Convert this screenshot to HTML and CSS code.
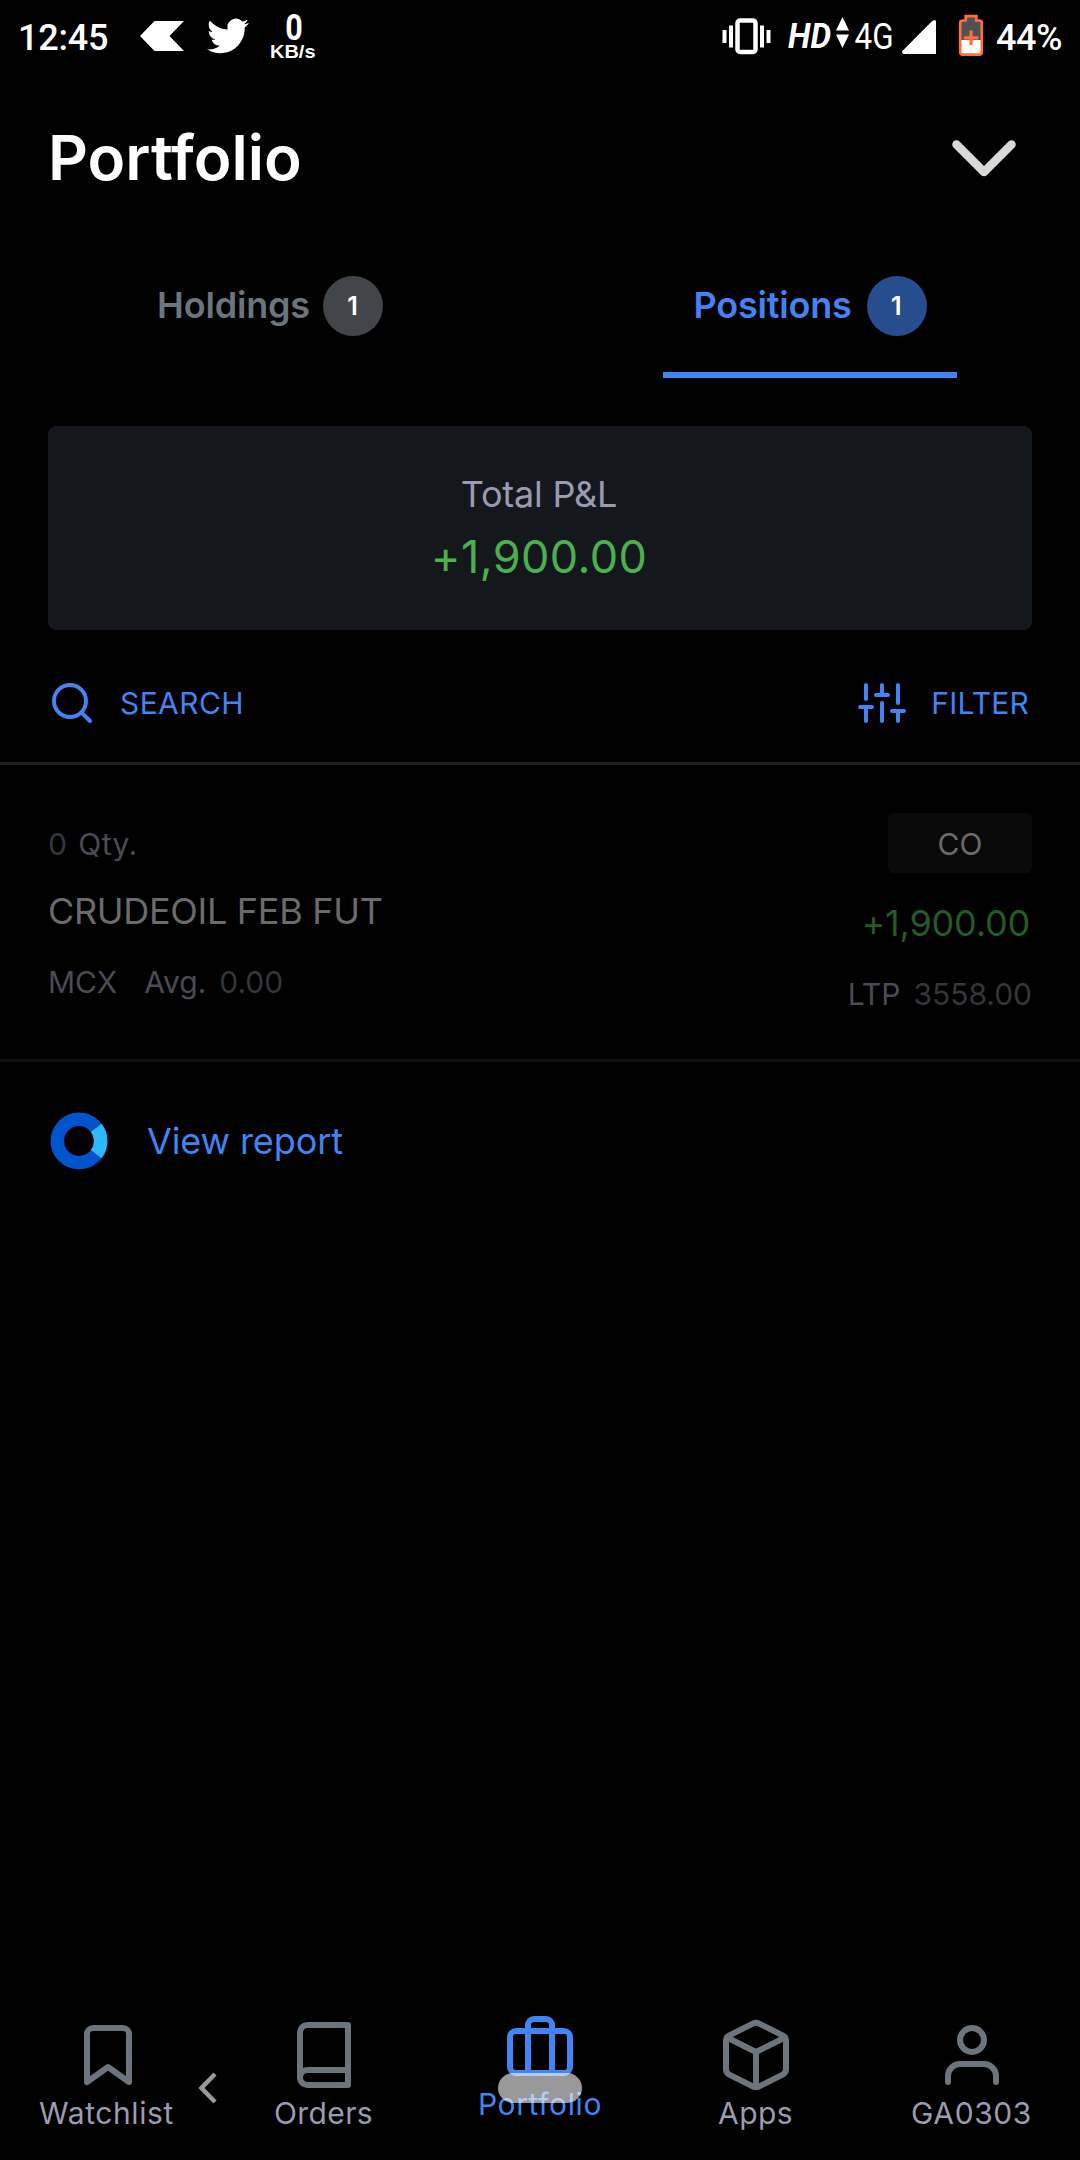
FILE: index.html
```html
<!DOCTYPE html>
<html lang="en">
<head>
<meta charset="utf-8">
<title>Portfolio</title>
<link rel="stylesheet" href="styles.css">
</head>
<body>
<div class="screen">
  <div class="status">
    <span class="clock">12:45</span>
    <svg class="st-flag" width="44" height="30" viewBox="0 0 44 30"><path d="M14.500 0H44L29.500 15 44 30H14.500L0 15z" fill="#fff"/></svg>
    <svg class="st-bird" width="42" height="36" viewBox="0 1.800 24 20.400" preserveAspectRatio="none"><path fill="#fff" d="M23.953 4.570a10 10 0 01-2.825.775 4.958 4.958 0 002.163-2.723c-.951.555-2.005.959-3.127 1.184a4.920 4.920 0 00-8.384 4.482C7.690 8.095 4.067 6.130 1.640 3.162a4.822 4.822 0 00-.666 2.475c0 1.710.870 3.213 2.188 4.096a4.904 4.904 0 01-2.228-.616v.060a4.923 4.923 0 003.946 4.827 4.996 4.996 0 01-2.212.085 4.936 4.936 0 004.604 3.417 9.867 9.867 0 01-6.102 2.105c-.390 0-.779-.023-1.170-.067a13.995 13.995 0 007.557 2.209c9.053 0 13.998-7.496 13.998-13.985 0-.210 0-.420-.015-.630A9.935 9.935 0 0024 4.590z"/></svg>
    <svg class="st-speed" width="46" height="48" viewBox="0 0 46 48"><text class="speed-num" x="24" y="27.500" text-anchor="middle" textLength="17.500" lengthAdjust="spacingAndGlyphs">0</text><text class="speed-unit" x="0" y="46" textLength="45.500" lengthAdjust="spacingAndGlyphs">KB/s</text></svg>
    <svg class="st-vibrate" width="49" height="37" viewBox="0 0 49 37" fill="none" stroke="#fff"><rect x="15.500" y="2.500" width="18" height="31.500" rx="2.500" stroke-width="4.500"/><path d="M2.500 12v13M46.500 12v13" stroke-width="4"/><path d="M9 7.500v22M40 7.500v22" stroke-width="4"/></svg>
    <svg class="st-net" width="106" height="36" viewBox="0 0 106 36"><text class="net-hd" x="0" y="30.500" textLength="43" lengthAdjust="spacingAndGlyphs">HD</text><path d="M54.500 0l6.500 13.500h-13zM54.500 31l6.500-13.500h-13z" fill="#fff"/><text class="net-4g" x="66.500" y="31.500" textLength="39" lengthAdjust="spacingAndGlyphs">4G</text></svg>
    <svg class="st-signal" width="34" height="34" viewBox="0 0 34 34"><path d="M30.500.800Q34-1.500 34 2V34H2Q-1 33.500.800 30.500z" fill="#fff"/></svg>
    <svg class="st-battery" width="26" height="43" viewBox="0 0 26 43"><path d="M2.200 9q0-2.500 2.500-2.500h3.800V2.500h9v4h3.800q2.500 0 2.500 2.500v29q0 2.700-2.500 2.700H4.700Q2.200 40.700 2.200 38z" fill="#515151"/><path d="M3 26h20v14H3z" fill="#fff"/><path d="M2.200 9q0-2.500 2.500-2.500h3V2.200h10.600v4.300h3q2.500 0 2.500 2.500v29q0 2.700-2.500 2.700H4.700Q2.200 40.700 2.200 38z" fill="none" stroke="#ff6e40" stroke-width="2.700"/><path d="M13 16.500V31M5.800 23.800h14.600" fill="none" stroke="#ff6e40" stroke-width="3.300"/></svg>
    <span class="percent">44%</span>
  </div>

  <header class="header">
    <h1 class="title">Portfolio</h1>
    <svg width="64" height="37" viewBox="0 0 64 37" fill="none" stroke="#dadad8" stroke-width="8.500" stroke-linecap="round" stroke-linejoin="round"><path d="M4.500 4.500L32 32 59.500 4.500"/></svg>
  </header>

  <nav class="tabs">
    <div class="tab"><div class="tab-in"><span>Holdings</span><b class="badge">1</b></div></div>
    <div class="tab tab-on"><div class="tab-in"><span>Positions</span><b class="badge">1</b></div></div>
  </nav>

  <section class="summary">
    <div class="summary-label">Total P&amp;L</div>
    <div class="summary-value">+1,900.00</div>
  </section>

  <div class="tools">
    <div class="tool search"><svg class="stroke" width="48" height="48" viewBox="0 0 24 24"><circle cx="11" cy="11" r="8"/><path d="M21 21l-4.350-4.350"/></svg><span>SEARCH</span></div>
    <div class="tool filter"><svg class="stroke" width="48" height="48" viewBox="0 0 24 24"><path d="M4 21v-7M4 10V3M12 21v-9M12 8V3M20 21v-5M20 12V3M1 14h6M9 8h6M17 16h6"/></svg><span>FILTER</span></div>
  </div>

  <article class="position">
    <div class="pos-left">
      <div class="meta qty"><i>0</i><span>Qty.</span></div>
      <div class="symbol">CRUDEOIL FEB FUT</div>
      <div class="meta exch"><span>MCX</span><span class="avg">Avg.</span><i>0.00</i></div>
    </div>
    <div class="pos-right">
      <div class="product">CO</div>
      <div class="gain">+1,900.00</div>
      <div class="meta ltp"><span>LTP</span><i>3558.00</i></div>
    </div>
  </article>

  <a class="report"><svg width="58" height="58" viewBox="-29 -29 58 58" fill="none" stroke-width="13.500"><circle r="21.700" stroke="#0055cc"/><path d="M17.200-13.230A21.700 21.700 0 0 1 17.200 13.230" stroke="#2eb6ff"/></svg><span>View report</span></a>

  <nav class="bottom">
    <div class="item watch"><svg class="stroke" width="72" height="72" viewBox="0 0 24 24"><path d="M19 21l-7-5-7 5V5a2 2 0 0 1 2-2h10a2 2 0 0 1 2 2z"/></svg><span>Watchlist</span></div>
    <div class="item"><svg class="stroke" width="72" height="72" viewBox="0 0 24 24"><path d="M4 19.500A2.500 2.500 0 0 1 6.500 17H20"/><path d="M6.500 2H20v20H6.500A2.500 2.500 0 0 1 4 19.500v-15A2.500 2.500 0 0 1 6.500 2z"/></svg><span>Orders</span></div>
    <div class="item item-on"><svg class="stroke" width="72" height="72" viewBox="0 0 24 24"><rect x="2" y="7" width="20" height="14" rx="2"/><path d="M16 21V5a2 2 0 0 0-2-2h-4a2 2 0 0 0-2 2v16"/></svg><span>Portfolio</span></div>
    <div class="item"><svg class="stroke" width="72" height="72" viewBox="0 0 24 24"><path d="M12.890 1.450l8 4A2 2 0 0 1 22 7.240v9.530a2 2 0 0 1-1.110 1.790l-8 4a2 2 0 0 1-1.790 0l-8-4a2 2 0 0 1-1.100-1.800V7.240a2 2 0 0 1 1.110-1.790l8-4a2 2 0 0 1 1.780 0z"/><path d="M2.320 6.160L12 11l9.680-4.840M12 22.760V11"/></svg><span>Apps</span></div>
    <div class="item user"><svg class="stroke" width="72" height="72" viewBox="0 0 24 24"><path d="M20 21v-2a4 4 0 0 0-4-4H8a4 4 0 0 0-4 4v2"/><circle cx="12" cy="7" r="4"/></svg><span>GA0303</span></div>
  </nav>

  <svg class="sys-back" width="20" height="32" viewBox="0 0 20 32" fill="none" stroke="#999" stroke-width="4.500"><path d="M17 2L3.500 16 17 30"/></svg>
  <div class="sys-home"></div>
</div>
</body>
</html>
```

FILE: styles.css
```css
* { box-sizing: border-box; }
body { margin: 0; background: #000; }
.screen {
  position: relative;
  display: flex;
  flex-direction: column;
  width: 1080px;
  height: 2160px;
  overflow: hidden;
  background: #000;
  color: #fff;
  font-family: Inter, "Liberation Sans", sans-serif;
}
svg { display: block; flex: none; overflow: visible; }
i { font-style: normal; }
.stroke {
  fill: none;
  stroke: currentColor;
  stroke-width: 2;
  stroke-linecap: round;
  stroke-linejoin: round;
}

.status {
  display: flex;
  align-items: flex-start;
  height: 72px;
  padding: 0 17px 0 18px;
  font-family: Roboto, sans-serif;
}
.clock, .percent {
  margin-top: 17px;
  font-size: 36px;
  font-weight: 500;
  line-height: 42px;
  white-space: nowrap;
}
.clock { width: 92px; letter-spacing: -0.2px; }
.st-flag { margin: 21px 0 0 30px; }
.st-bird { margin: 18px 0 0 23px; }
.st-speed { margin: 12px 0 0 21px; }
.speed-num { fill: #fff; font: 700 36px Roboto, sans-serif; }
.speed-unit { fill: #fff; font: 700 19px "Liberation Sans", sans-serif; }
.st-vibrate { margin: 18px 0 0 auto; }
.st-net { margin: 17px 0 0 17px; }
.net-hd { fill: #fff; font: italic 700 35px Roboto, sans-serif; }
.net-4g { fill: #fff; font: 400 36px Roboto, sans-serif; }
.st-signal { margin: 20px 0 0 8px; }
.st-battery { margin: 14px 0 0 22px; }
.percent { margin-left: 12px; width: 67px; letter-spacing: -0.4px; }

.header {
  display: flex;
  align-items: center;
  justify-content: space-between;
  height: 171px;
  padding: 2px 64px 0 48px;
}
.title { margin: 0 0 2px; font-size: 62px; font-weight: 600; line-height: 80px; }

.tabs { display: flex; height: 135px; }
.tab { flex: 1; display: flex; justify-content: center; color: #6c757d; }
.tab-in {
  display: flex;
  align-items: center;
  justify-content: center;
  gap: 13px;
  width: 294px;
  padding-bottom: 3px;
  font-size: 36px;
  font-weight: 600;
  letter-spacing: -0.2px;
  border-bottom: 6px solid transparent;
}
.tab-in span { padding-bottom: 2px; }
.tab-on { color: #4184f3; }
.tab-on .tab-in { border-color: #4184f3; gap: 15px; }
.badge {
  display: grid;
  place-items: center;
  width: 60px;
  height: 60px;
  padding-right: 1px;
  border-radius: 50%;
  background: #424549;
  color: #fff;
  font-size: 25px;
  font-weight: 600;
}
.tab-on .badge { background: #264e8e; }

.summary {
  height: 204px;
  margin: 48px 48px 0;
  padding: 42px 2px 0 0;
  border-radius: 8px;
  background: #14171b;
  text-align: center;
}
.summary-label { font-size: 36px; line-height: 52px; letter-spacing: -0.2px; color: #9b9bb0; }
.summary-value { margin-top: 6px; font-size: 45px; line-height: 62px; letter-spacing: 0.4px; color: #4caf50; }

.tools {
  display: flex;
  justify-content: space-between;
  height: 135px;
  padding: 49px 51px 0 48px;
  border-bottom: 3px solid #212121;
  color: #4184f3;
}
.tool { display: flex; height: 48px; line-height: 48px; font-size: 30px; letter-spacing: 0.4px; }
.search { gap: 24px; }
.filter { gap: 25px; letter-spacing: 0.2px; }

.position {
  display: flex;
  justify-content: space-between;
  height: 297px;
  padding: 48px 48px 0;
  border-bottom: 3px solid #101010;
}
.meta { display: flex; height: 40px; line-height: 40px; font-size: 30px; color: #4d4a56; }
.meta i { color: #33373b; }
.pos-left { padding-top: 11px; }
.qty { gap: 11px; letter-spacing: 0.4px; }
.symbol { margin-top: 22px; font-size: 36px; line-height: 50px; letter-spacing: -0.3px; color: #6b6b6b; }
.exch { margin-top: 26px; }
.avg { margin: 0 13px 0 27px; }
.pos-right { display: flex; flex-direction: column; align-items: flex-end; }
.product {
  width: 144px;
  height: 60px;
  border-radius: 6px;
  background: #0a0a0a;
  color: #6b6b6b;
  font-size: 30px;
  line-height: 62px;
  text-align: center;
}
.gain { margin: 25px 2px 0 0; font-size: 36px; line-height: 50px; letter-spacing: -0.2px; color: #265828; }
.ltp { margin: 26px 0 0; gap: 13px; }

.report {
  display: flex;
  align-items: center;
  gap: 39px;
  height: 60px;
  margin: 49px 0 0 50px;
  font-size: 36px;
  letter-spacing: -0.1px;
  color: #4184f3;
}

.bottom { display: flex; height: 141px; margin-top: auto; }
.item {
  flex: 1;
  display: flex;
  flex-direction: column;
  align-items: center;
  color: #6c757d;
}
.item span { margin-top: 2px; padding-right: 1px; font-size: 30px; line-height: 40px; letter-spacing: 0.4px; color: #9b9bb0; }
.watch span { padding-right: 3px; letter-spacing: 0.6px; }
.item-on { margin-top: -9px; color: #4184f3; }
.item-on span { padding-right: 0; color: #4184f3; letter-spacing: 0.6px; }
.user span { letter-spacing: 0.6px; }

.sys-back { position: absolute; left: 198px; top: 2072px; }
.sys-home {
  position: absolute;
  left: 498px;
  top: 2073px;
  width: 84px;
  height: 30px;
  border-radius: 15px;
  background: rgba(255, 255, 255, 0.6);
}
```
